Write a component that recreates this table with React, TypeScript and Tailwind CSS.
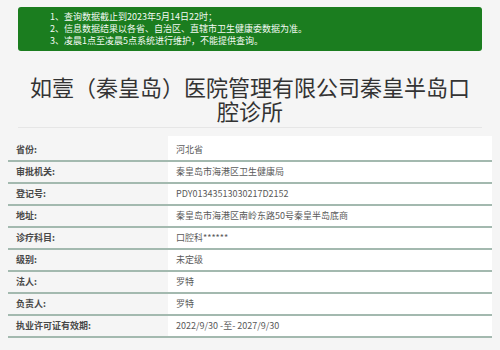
const rows: { label: string; value: string }[] = [
  { label: '省份:', value: '河北省' },
  { label: '审批机关:', value: '秦皇岛市海港区卫生健康局' },
  { label: '登记号:', value: 'PDY01343513030217D2152' },
  { label: '地址:', value: '秦皇岛市海港区南岭东路50号秦皇半岛底商' },
  { label: '诊疗科目:', value: '口腔科******' },
  { label: '级别:', value: '未定级' },
  { label: '法人:', value: '罗特' },
  { label: '负责人:', value: '罗特' },
  { label: '执业许可证有效期:', value: '2022/9/30 -至- 2027/9/30' },
]

export default function App() {
  return (
    <div
      className="w-[500px] h-[350px] overflow-hidden bg-[#f5f5f5]"
      style={{ fontFamily: '"Noto Sans CJK SC", "Open Sans", sans-serif' }}
    >
      {/* notice */}
      <div className="mx-[18px] mt-[7px] h-[44px] rounded-[3px] bg-[#1b7d1f] pl-[32px] pt-[4px] text-[9px] leading-[12px] text-[#f4faf4]">
        <p>1、查询数据截止到2023年5月14日22时；</p>
        <p>2、信息数据结果以各省、自治区、直辖市卫生健康委数据为准。</p>
        <p>3、凌晨1点至凌晨5点系统进行维护，不能提供查询。</p>
      </div>

      {/* title */}
      <h1 className="mx-[17px] mt-[23px] text-center text-[22px] leading-[24px] text-[#333]">
        <span className="block">
          如壹<span className="inline-block w-[22px] text-right">（</span>秦皇岛
          <span className="inline-block w-[22px] text-left">）</span>医院管理有限公司秦皇半岛口
        </span>
        <span className="block">腔诊所</span>
      </h1>
      <div className="mx-[18px] mt-[5px] h-px bg-[#e6e6e6]" />

      {/* details */}
      <div className="mx-[8px] mt-[8px]">
        {rows.map((r, i) => (
          <div
            key={r.label}
            className={`flex border-b-2 border-[#a3b9af] text-[9px] ${i === 0 ? 'h-[26px]' : 'h-[22px]'}`}
          >
            <div className="flex w-[160px] items-end pb-[4px] pl-[8px] font-bold text-[#484848]">{r.label}</div>
            <div className="flex flex-1 items-end bg-white pb-[4px] pl-[8px] text-[#5a5a5a]">{r.value}</div>
          </div>
        ))}
      </div>
    </div>
  )
}
